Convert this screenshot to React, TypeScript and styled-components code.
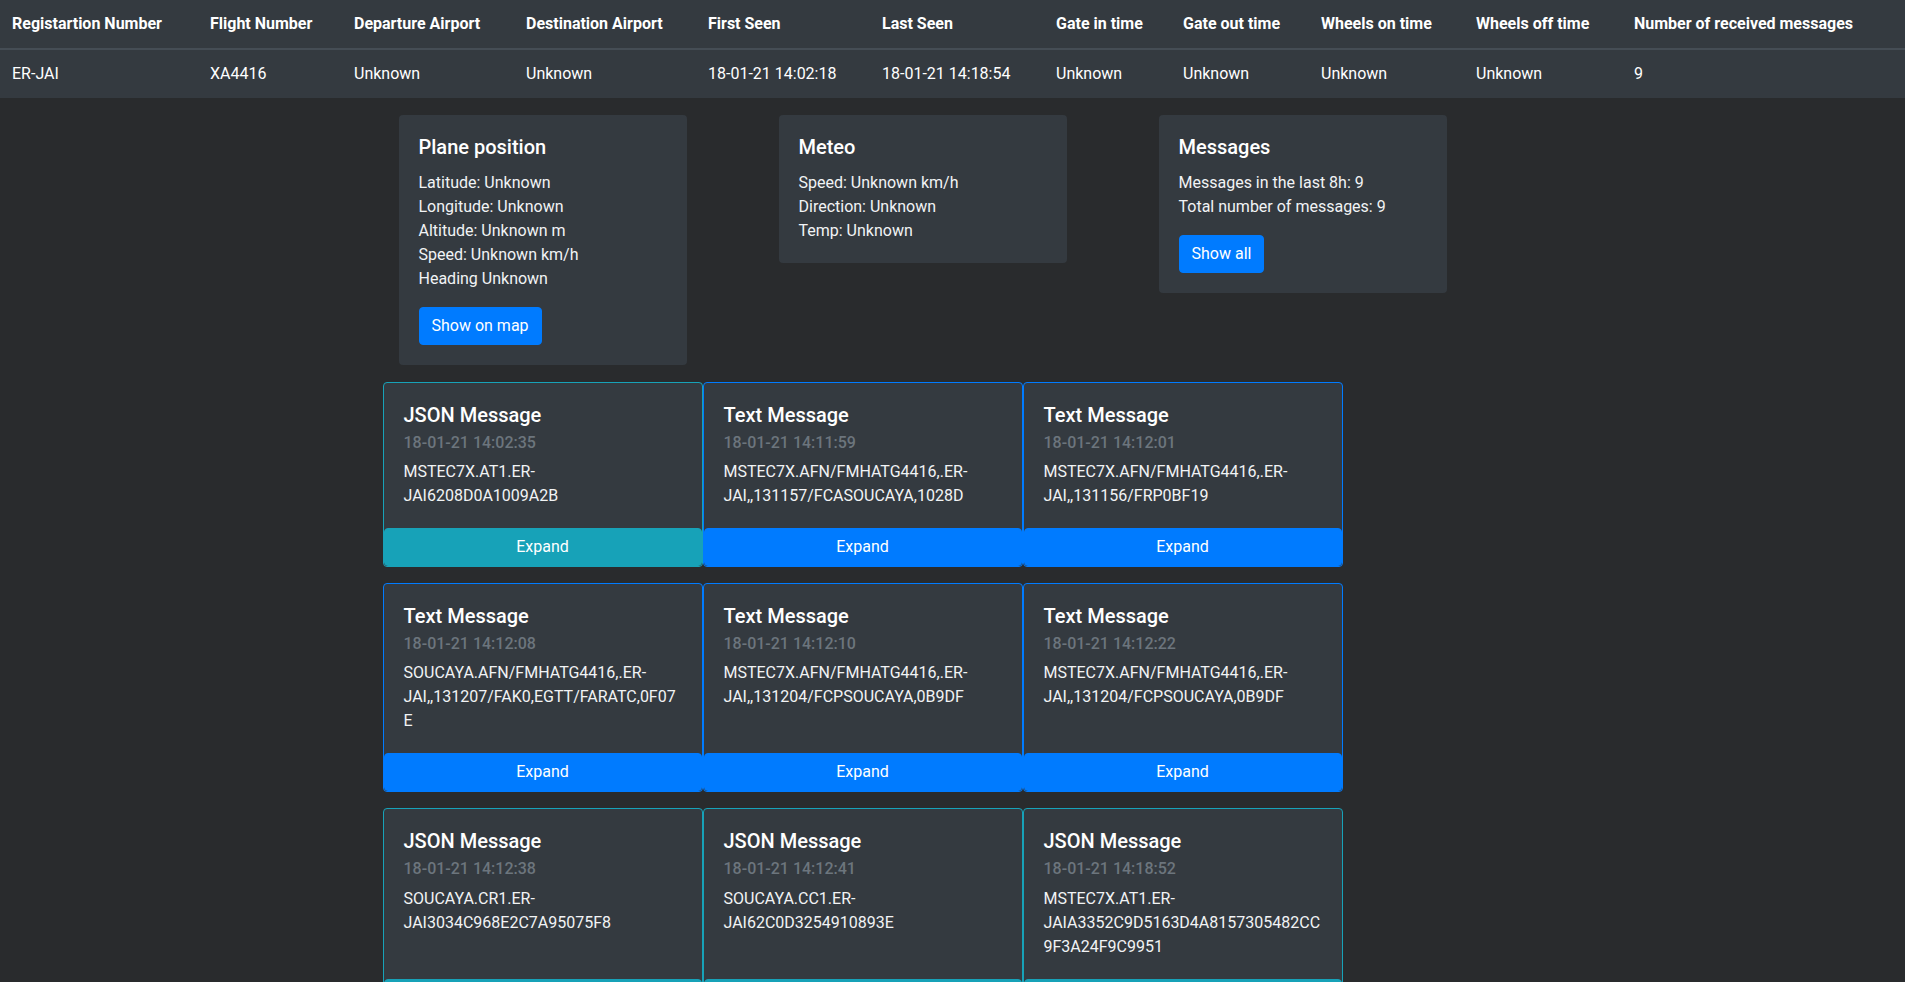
import React from "react";
import styled, { createGlobalStyle } from "styled-components";

const GlobalStyle = createGlobalStyle`
  html, body {
    margin: 0;
    padding: 0;
    background: #292b2d;
    color: #fff;
    font-family: Roboto, "Liberation Sans", Arial, sans-serif;
    font-size: 16px;
    line-height: 1.5;
  }
  * { box-sizing: border-box; }
`;

const Page = styled.div`
  width: 100%;
  min-height: 982px;
`;

const Table = styled.table`
  width: 100%;
  border-collapse: collapse;
  table-layout: fixed;
  background: #343a40;
  color: #fff;
`;

const HeadCell = styled.th<{ $w: number }>`
  width: ${(p) => p.$w}px;
  padding: 12px;
  text-align: left;
  font-weight: 700;
  vertical-align: bottom;
  white-space: nowrap;
  border-bottom: 2px solid #454d55;
`;

const Cell = styled.td`
  padding: 12px;
  vertical-align: top;
  white-space: nowrap;
`;

const Container = styled.div`
  width: 1140px;
  margin: 17px auto 0;
`;

const InfoRow = styled.div`
  display: grid;
  grid-template-columns: repeat(3, 380px);
  align-items: start;
  margin-bottom: 17px;
  padding-left: 1px;
`;

const InfoCol = styled.div`
  padding: 0 15px;
`;

const InfoCard = styled.div`
  width: 288px;
  background: #343a40;
  border-radius: 4px;
  padding: 20px;
`;

const CardTitle = styled.h5`
  margin: 0 0 12px;
  font-size: 20px;
  font-weight: 500;
  line-height: 1.2;
  color: #fff;
`;

const CardText = styled.div`
  color: #f1f3f5;
  margin-bottom: 16px;
  &:last-child {
    margin-bottom: 0;
  }
`;

const Line = styled.span`
  display: block;
`;

const Button = styled.button<{ $variant: "primary" | "info"; $block?: boolean }>`
  display: ${(p) => (p.$block ? "block" : "inline-block")};
  width: ${(p) => (p.$block ? "100%" : "auto")};
  font-family: inherit;
  font-size: 16px;
  line-height: 1.5;
  font-weight: 400;
  color: #fff;
  background: ${(p) => (p.$variant === "info" ? "#17a2b8" : "#007bff")};
  border: 1px solid ${(p) => (p.$variant === "info" ? "#17a2b8" : "#007bff")};
  border-radius: 4px;
  padding: 6px 12px;
  text-align: center;
  cursor: pointer;
`;

const MessageGrid = styled.div`
  display: flex;
  flex-wrap: wrap;
  row-gap: 16px;
`;

const MessageCard = styled.div<{ $variant: "primary" | "info" }>`
  width: 320px;
  display: flex;
  flex-direction: column;
  background: #343a40;
  border: 1px solid ${(p) => (p.$variant === "info" ? "#17a2b8" : "#007bff")};
  border-radius: 4px;
`;

const MessageBody = styled.div`
  flex: 1;
  padding: 20px;
`;

const Subtitle = styled.h6`
  margin: -6px 0 8px;
  font-size: 16px;
  font-weight: 500;
  line-height: 1.2;
  color: #6c757d;
`;

const MessageText = styled.p`
  margin: 0;
  color: #f1f3f5;
  overflow-wrap: break-word;
  word-wrap: break-word;
`;

const columns: [string, number][] = [
  ["Registartion Number", 198],
  ["Flight Number", 144],
  ["Departure Airport", 172],
  ["Destination Airport", 182],
  ["First Seen", 174],
  ["Last Seen", 174],
  ["Gate in time", 127],
  ["Gate out time", 138],
  ["Wheels on time", 155],
  ["Wheels off time", 158],
  ["Number of received messages", 283],
];

const row = [
  "ER-JAI",
  "XA4416",
  "Unknown",
  "Unknown",
  "18-01-21 14:02:18",
  "18-01-21 14:18:54",
  "Unknown",
  "Unknown",
  "Unknown",
  "Unknown",
  "9",
];

type Msg = { kind: "JSON" | "Text"; time: string; text: string };

const messages: Msg[] = [
  { kind: "JSON", time: "18-01-21 14:02:35", text: "MSTEC7X.AT1.ER-JAI6208D0A1009A2B" },
  { kind: "Text", time: "18-01-21 14:11:59", text: "MSTEC7X.AFN/FMHATG4416,.ER-JAI,,131157/FCASOUCAYA,1028D" },
  { kind: "Text", time: "18-01-21 14:12:01", text: "MSTEC7X.AFN/FMHATG4416,.ER-JAI,,131156/FRP0BF19" },
  { kind: "Text", time: "18-01-21 14:12:08", text: "SOUCAYA.AFN/FMHATG4416,.ER-JAI,,131207/FAK0,EGTT/FARATC,0F07E" },
  { kind: "Text", time: "18-01-21 14:12:10", text: "MSTEC7X.AFN/FMHATG4416,.ER-JAI,,131204/FCPSOUCAYA,0B9DF" },
  { kind: "Text", time: "18-01-21 14:12:22", text: "MSTEC7X.AFN/FMHATG4416,.ER-JAI,,131204/FCPSOUCAYA,0B9DF" },
  { kind: "JSON", time: "18-01-21 14:12:38", text: "SOUCAYA.CR1.ER-JAI3034C968E2C7A95075F8" },
  { kind: "JSON", time: "18-01-21 14:12:41", text: "SOUCAYA.CC1.ER-JAI62C0D3254910893E" },
  { kind: "JSON", time: "18-01-21 14:18:52", text: "MSTEC7X.AT1.ER-JAIA3352C9D5163D4A8157305482CC9F3A24F9C9951" },
];

export default function App() {
  return (
    <Page>
      <GlobalStyle />
      <Table>
        <thead>
          <tr>
            {columns.map(([label, w]) => (
              <HeadCell key={label} $w={w}>
                {label}
              </HeadCell>
            ))}
          </tr>
        </thead>
        <tbody>
          <tr>
            {row.map((v, i) => (
              <Cell key={i}>{v}</Cell>
            ))}
          </tr>
        </tbody>
      </Table>

      <Container>
        <InfoRow>
          <InfoCol>
            <InfoCard>
              <CardTitle>Plane position</CardTitle>
              <CardText>
                <Line>Latitude: Unknown</Line>
                <Line>Longitude: Unknown</Line>
                <Line>Altitude: Unknown m</Line>
                <Line>Speed: Unknown km/h</Line>
                <Line>Heading Unknown</Line>
              </CardText>
              <Button $variant="primary">Show on map</Button>
            </InfoCard>
          </InfoCol>
          <InfoCol>
            <InfoCard>
              <CardTitle>Meteo</CardTitle>
              <CardText>
                <Line>Speed: Unknown km/h</Line>
                <Line>Direction: Unknown</Line>
                <Line>Temp: Unknown</Line>
              </CardText>
            </InfoCard>
          </InfoCol>
          <InfoCol>
            <InfoCard>
              <CardTitle>Messages</CardTitle>
              <CardText>
                <Line>Messages in the last 8h: 9</Line>
                <Line>Total number of messages: 9</Line>
              </CardText>
              <Button $variant="primary">Show all</Button>
            </InfoCard>
          </InfoCol>
        </InfoRow>

        <MessageGrid>
          {messages.map((m, i) => {
            const variant = m.kind === "JSON" ? "info" : "primary";
            return (
              <MessageCard key={i} $variant={variant}>
                <MessageBody>
                  <CardTitle>{m.kind} Message</CardTitle>
                  <Subtitle>{m.time}</Subtitle>
                  <MessageText>{m.text}</MessageText>
                </MessageBody>
                <Button $variant={variant} $block>
                  Expand
                </Button>
              </MessageCard>
            );
          })}
        </MessageGrid>
      </Container>
    </Page>
  );
}
